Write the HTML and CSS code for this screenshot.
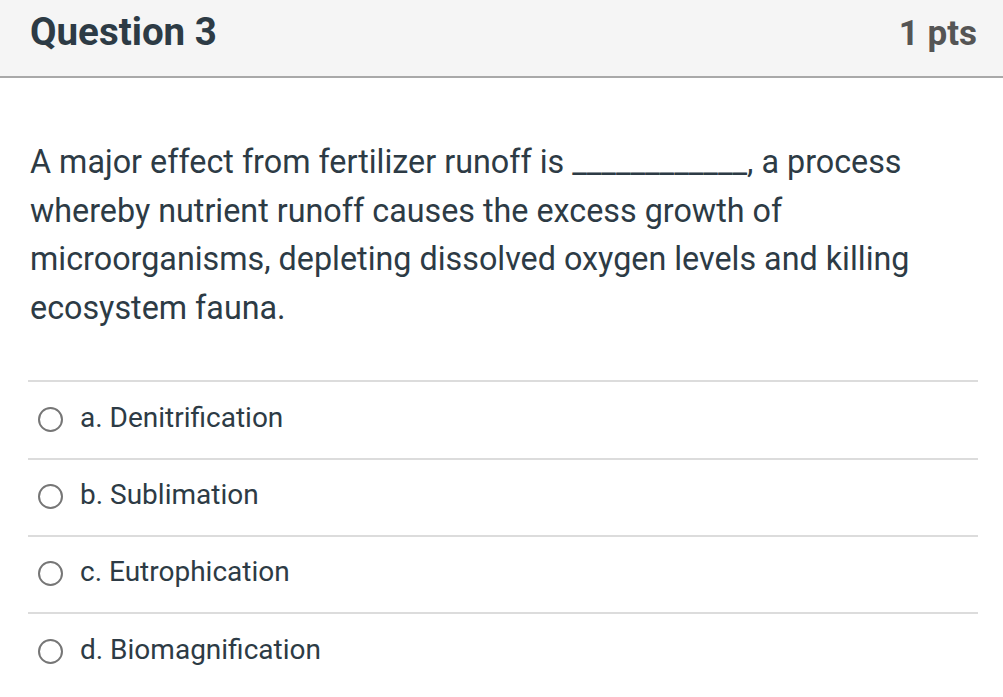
FILE: index.html
```html
<!DOCTYPE html>
<html lang="en">
<head>
<meta charset="utf-8">
<title>Question 3</title>
<link rel="stylesheet" href="styles.css">
</head>
<body>
<div class="question">
  <div class="q-header">
    <h2 class="q-title">Question 3</h2>
    <div class="q-points">1 pts</div>
  </div>
  <div class="q-body">
    <p class="q-text">A major effect from fertilizer runoff is ____________, a process whereby nutrient runoff causes the excess growth of microorganisms, depleting dissolved oxygen levels and killing ecosystem fauna.</p>
    <ul class="answers">
      <li class="answer"><span class="radio"></span><span class="label">a. Denitrification</span></li>
      <li class="answer"><span class="radio"></span><span class="label">b. Sublimation</span></li>
      <li class="answer"><span class="radio"></span><span class="label">c. Eutrophication</span></li>
      <li class="answer"><span class="radio"></span><span class="label">d. Biomagnification</span></li>
    </ul>
  </div>
</div>
</body>
</html>
```
FILE: styles.css
```css
html, body {
  margin: 0;
  padding: 0;
  background: #ffffff;
}
body {
  font-family: Roboto, "Liberation Sans", Arial, sans-serif;
  color: #2d3b45;
  overflow: hidden;
}
.q-header {
  display: flex;
  justify-content: space-between;
  align-items: baseline;
  box-sizing: border-box;
  height: 78px;
  padding: 9px 26px 0 30px;
  background: #f5f5f5;
  border-bottom: 2px solid #a9a9a9;
}
.q-title {
  margin: 0;
  font-size: 38.5px;
  font-weight: 700;
  line-height: normal;
  color: #2d3b45;
}
.q-points {
  font-size: 35px;
  font-weight: 700;
  line-height: normal;
  color: #555555;
}
.q-body {
  padding: 60px 25px 0 28px;
}
.q-text {
  margin: 0 0 48px 2px;
  font-size: 32.3px;
  line-height: 48.6px;
  max-width: 940px;
}
.answers {
  list-style: none;
  margin: 0;
  padding: 0;
}
.answer {
  display: flex;
  align-items: flex-start;
  border-top: 2px solid #dcdcdc;
  padding: 19.5px 0 23.8px 0;
}
.radio {
  box-sizing: border-box;
  flex: none;
  width: 25px;
  height: 25px;
  margin: 5px 0 0 10px;
  border: 2px solid #767676;
  border-radius: 50%;
  background: #fff;
}
.label {
  margin-left: 17px;
  font-size: 28px;
  line-height: 32px;
}
```
